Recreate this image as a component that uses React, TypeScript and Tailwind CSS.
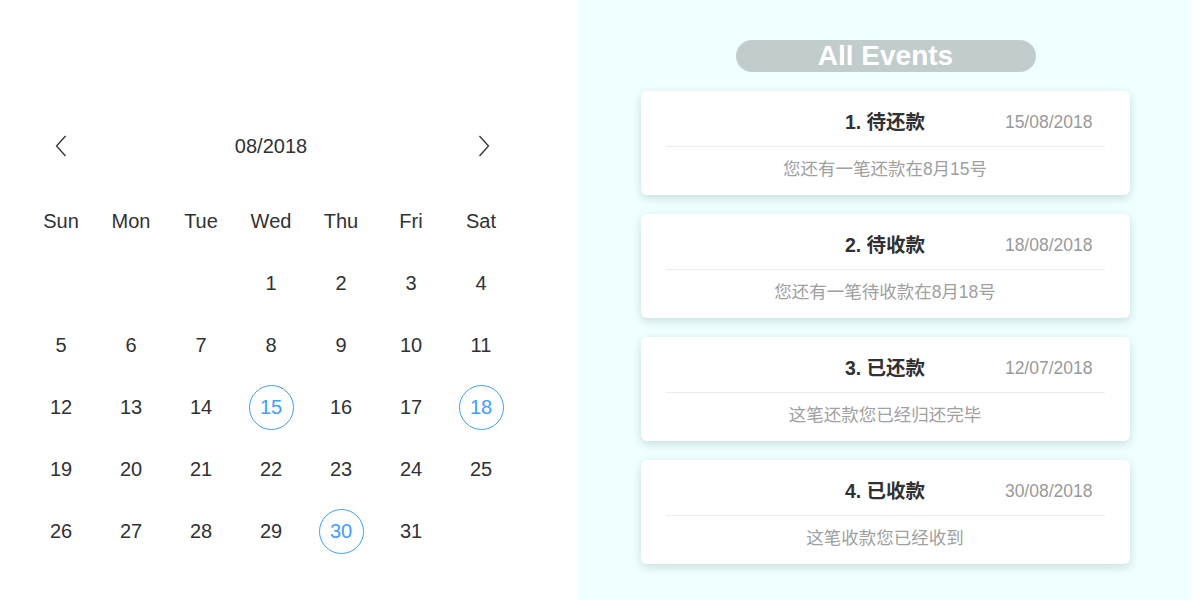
import React from "react";

const latin = "font-['Liberation_Sans','Noto_Sans_CJK_SC',sans-serif]";

const weekDays = ["Sun", "Mon", "Tue", "Wed", "Thu", "Fri", "Sat"];
const marked = [15, 18, 30];

const events = [
  { title: "1. 待还款", date: "15/08/2018", desc: "您还有一笔还款在8月15号" },
  { title: "2. 待收款", date: "18/08/2018", desc: "您还有一笔待收款在8月18号" },
  { title: "3. 已还款", date: "12/07/2018", desc: "这笔还款您已经归还完毕" },
  { title: "4. 已收款", date: "30/08/2018", desc: "这笔收款您已经收到" }
];

function Chevron({ dir }: { dir: "left" | "right" }) {
  return (
    <svg width="12" height="22" viewBox="0 0 12 22" fill="none" stroke="#303133" strokeWidth="1.3">
      {dir === "left" ? <path d="M10.5 1 L1.5 11 L10.5 21" /> : <path d="M1.5 1 L10.5 11 L1.5 21" />}
    </svg>
  );
}

function Calendar() {
  // August 2018 starts on a Wednesday
  const cells: (number | null)[] = [null, null, null];
  for (let d = 1; d <= 31; d++) cells.push(d);

  return (
    <div className="pl-[26px] pt-[126px]">
      <div className="grid h-[40px] w-[490px] grid-cols-[70px_1fr_70px] items-center text-[20px] text-[#303133]">
        <div className="flex justify-center pr-[1px]">
          <Chevron dir="left" />
        </div>
        <div className="text-center">08/2018</div>
        <div className="flex justify-center pl-[6px]">
          <Chevron dir="right" />
        </div>
      </div>
      <div className="mt-[24px] grid w-[490px] grid-cols-7 text-[20px] text-[#303133]">
        {weekDays.map((w) => (
          <div key={w} className="flex h-[62px] items-center justify-center">
            {w}
          </div>
        ))}
        {cells.map((d, i) => (
          <div key={i} className="flex h-[62px] items-center justify-center">
            {d !== null &&
              (marked.includes(d) ? (
                <span className="flex h-[45px] w-[45px] items-center justify-center rounded-full border border-[#409eff] text-[#409eff]">
                  {d}
                </span>
              ) : (
                <span>{d}</span>
              ))}
          </div>
        ))}
      </div>
    </div>
  );
}

function EventCard({ title, date, desc }: { title: string; date: string; desc: string }) {
  return (
    <div className="h-[104px] w-[489px] rounded-[6px] bg-white px-[25px] pt-[18px] shadow-[0_3px_10px_rgba(120,160,160,0.35)]">
      <div className="relative h-[26px] leading-[26px]">
        <div className="text-center text-[19.5px] font-bold text-[#303133]">{title}</div>
        <div className="absolute top-0 right-[12px] text-[17.5px] text-[#999]">{date}</div>
      </div>
      <div className="mt-[11px] h-px bg-[#ececec]" />
      <div className="mt-[10px] text-center text-[17.5px] leading-[24px] text-[#a0a0a0]">{desc}</div>
    </div>
  );
}

export default function App() {
  return (
    <div className={`flex h-[600px] w-[1200px] bg-white ${latin}`}>
      <div className="w-[578px] shrink-0">
        <Calendar />
      </div>
      <div className="flex w-[614px] flex-col items-center bg-[#f0ffff] pt-[40px]">
        <div className="ml-[1px] flex h-[32px] w-[300px] items-center justify-center rounded-full bg-[#c1cccc] text-[28px] font-bold text-white">
          All Events
        </div>
        <div className="mt-[19px] flex flex-col gap-[19px]">
          {events.map((e) => (
            <EventCard key={e.title} {...e} />
          ))}
        </div>
      </div>
    </div>
  );
}
